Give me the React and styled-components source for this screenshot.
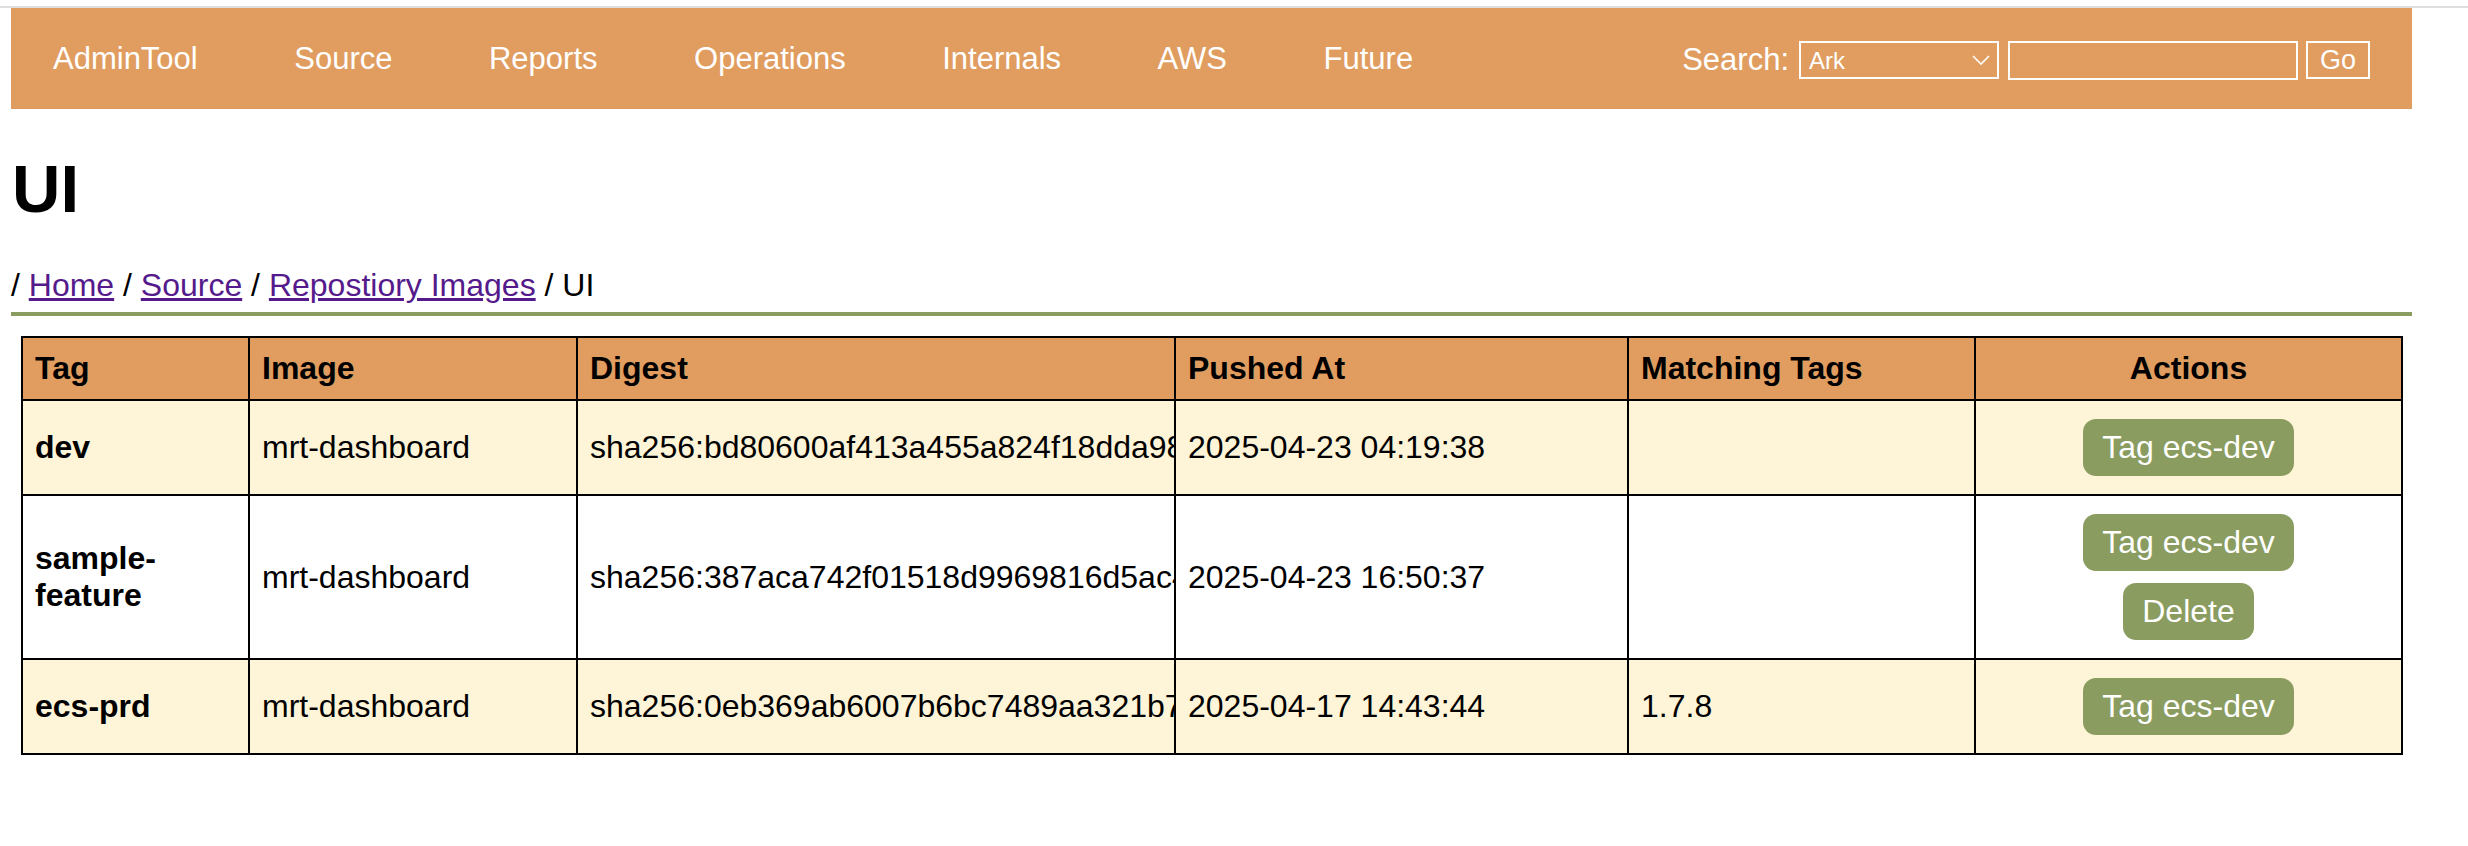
import React from "react";
import styled, { createGlobalStyle } from "styled-components";

const orange = "#e09d5f";
const cream = "#fef4d7";
const olive = "#8a9c5f";

const GlobalStyle = createGlobalStyle`
  body {
    margin: 0;
    background: #fff;
    font-family: "Liberation Sans", Arial, Helvetica, sans-serif;
    color: #000;
  }
`;

const Window = styled.div`
  margin-top: 6px;
  border-top: 2px solid #dedede;
  padding: 0 56px 40px 11px;
`;

const NavBar = styled.nav`
  height: 101px;
  background: ${orange};
  display: flex;
  align-items: center;
  padding: 0 42px 0 42px;
`;

const NavLinks = styled.div`
  display: flex;
  gap: 96.5px;
`;

const NavLink = styled.a`
  color: #fff;
  font-size: 31px;
  text-decoration: none;
`;

const SearchForm = styled.form`
  margin-left: auto;
  margin-top: 3px;
  display: flex;
  align-items: center;
`;

const SearchLabel = styled.label`
  color: #fff;
  font-size: 31px;
  margin-right: 10px;
`;

const SelectWrap = styled.div`
  position: relative;
  width: 200px;
  height: 38px;
`;

const Select = styled.select`
  appearance: none;
  box-sizing: border-box;
  width: 100%;
  height: 100%;
  border: 2px solid #fff;
  border-radius: 0;
  background: transparent;
  color: #fff;
  font-family: inherit;
  font-size: 24px;
  padding: 0 0 0 8px;
  outline: none;
`;

const Chevron = styled.svg`
  position: absolute;
  right: 9px;
  top: 14px;
  pointer-events: none;
`;

const SearchInput = styled.input`
  box-sizing: border-box;
  width: 290px;
  height: 39px;
  margin-left: 9px;
  border: 2px solid #fff;
  background: transparent;
  outline: none;
`;

const GoButton = styled.button`
  box-sizing: border-box;
  width: 64px;
  height: 38px;
  margin-left: 8px;
  border: 2px solid #fff;
  background: transparent;
  color: #fff;
  font-family: inherit;
  font-size: 27px;
  padding: 0;
`;

const Heading = styled.h1`
  margin: 41px 0 0 1px;
  font-size: 67px;
  font-weight: bold;
`;

const Breadcrumb = styled.div`
  margin-top: 40px;
  font-size: 32px;
  padding-bottom: 8px;
  border-bottom: 4px solid ${olive};
`;

const Crumb = styled.a`
  color: #551a8b;
  text-decoration: underline;
`;

const Table = styled.table`
  margin: 20px 10px 0;
  width: 2380px;
  table-layout: fixed;
  border-collapse: collapse;
  border: 2px solid #000;
  font-size: 32px;
`;

const HeadCell = styled.th`
  box-sizing: border-box;
  width: ${(p) => p.$w}px;
  background: ${orange};
  border: 2px solid #000;
  padding: 12px 12px;
  text-align: ${(p) => (p.$center ? "center" : "left")};
  font-weight: bold;
`;

const Row = styled.tr`
  background: ${(p) => (p.$shaded ? cream : "#fff")};
`;

const Cell = styled.td`
  border: 2px solid #000;
  padding: 18px 12px;
  font-weight: ${(p) => (p.$bold ? "bold" : "normal")};
  white-space: ${(p) => (p.$clip ? "nowrap" : "normal")};
  overflow: hidden;
`;

const ActionStack = styled.div`
  display: flex;
  flex-direction: column;
  align-items: center;
  gap: 12px;
`;

const ActionButton = styled.button`
  background: ${olive};
  color: #fff;
  border: none;
  border-radius: 13px;
  font-family: inherit;
  font-size: 32px;
  line-height: 35px;
  padding: 11px 19px;
`;

const columns = [
  { label: "Tag", w: 227 },
  { label: "Image", w: 328 },
  { label: "Digest", w: 598 },
  { label: "Pushed At", w: 453 },
  { label: "Matching Tags", w: 347 },
  { label: "Actions", w: 427, center: true },
];

const images = [
  {
    tag: "dev",
    image: "mrt-dashboard",
    digest: "sha256:bd80600af413a455a824f18dda98e2c71f0b",
    pushed: "2025-04-23 04:19:38",
    matching: "",
    canDelete: false,
  },
  {
    tag: "sample-feature",
    image: "mrt-dashboard",
    digest: "sha256:387aca742f01518d9969816d5ac4e0b17f2d",
    pushed: "2025-04-23 16:50:37",
    matching: "",
    canDelete: true,
  },
  {
    tag: "ecs-prd",
    image: "mrt-dashboard",
    digest: "sha256:0eb369ab6007b6bc7489aa321b7f54c0e8d2",
    pushed: "2025-04-17 14:43:44",
    matching: "1.7.8",
    canDelete: false,
  },
];

export default function App() {
  return (
    <>
      <GlobalStyle />
      <Window>
        <NavBar>
          <NavLinks>
            {["AdminTool", "Source", "Reports", "Operations", "Internals", "AWS", "Future"].map((item) => (
              <NavLink key={item} href="#">
                {item}
              </NavLink>
            ))}
          </NavLinks>
          <SearchForm onSubmit={(e) => e.preventDefault()}>
            <SearchLabel>Search:</SearchLabel>
            <SelectWrap>
              <Select defaultValue="Ark">
                <option>Ark</option>
                <option>Source</option>
              </Select>
              <Chevron width="18" height="11" viewBox="0 0 18 11">
                <polyline points="1,1 9,9 17,1" fill="none" stroke="#fff" strokeWidth="1.6" />
              </Chevron>
            </SelectWrap>
            <SearchInput type="text" />
            <GoButton type="submit">Go</GoButton>
          </SearchForm>
        </NavBar>

        <Heading>UI</Heading>

        <Breadcrumb>
          / <Crumb href="#">Home</Crumb> / <Crumb href="#">Source</Crumb> /{" "}
          <Crumb href="#">Repostiory Images</Crumb> / UI
        </Breadcrumb>

        <Table>
          <thead>
            <tr>
              {columns.map((c) => (
                <HeadCell key={c.label} $w={c.w} $center={c.center}>
                  {c.label}
                </HeadCell>
              ))}
            </tr>
          </thead>
          <tbody>
            {images.map((img, i) => (
              <Row key={img.tag} $shaded={i % 2 === 0}>
                <Cell $bold>{img.tag}</Cell>
                <Cell>{img.image}</Cell>
                <Cell $clip>{img.digest}</Cell>
                <Cell>{img.pushed}</Cell>
                <Cell>{img.matching}</Cell>
                <Cell>
                  <ActionStack>
                    <ActionButton>Tag ecs-dev</ActionButton>
                    {img.canDelete && <ActionButton>Delete</ActionButton>}
                  </ActionStack>
                </Cell>
              </Row>
            ))}
          </tbody>
        </Table>
      </Window>
    </>
  );
}
